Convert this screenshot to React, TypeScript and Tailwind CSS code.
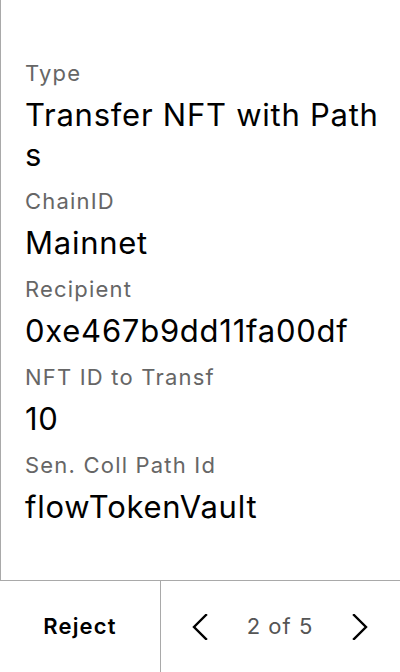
import React from 'react';

const fields = [
  { label: 'Type', value: 'Transfer NFT with Paths' },
  { label: 'ChainID', value: 'Mainnet' },
  { label: 'Recipient', value: '0xe467b9dd11fa00df' },
  { label: 'NFT ID to Transf', value: '10' },
  { label: 'Sen. Coll Path Id', value: 'flowTokenVault' },
];

function Chevron({ dir }: { dir: 'left' | 'right' }) {
  return (
    <svg width="16" height="26" viewBox="0 0 16 26" fill="none" aria-hidden>
      <path
        d={dir === 'left' ? 'M14 1 L2 13 L14 25' : 'M2 1 L14 13 L2 25'}
        stroke="#000"
        strokeWidth="2.4"
        strokeLinecap="square"
      />
    </svg>
  );
}

export default function App() {
  return (
    <div
      className="flex h-[672px] w-[400px] flex-col bg-white text-black"
      style={{ fontFamily: 'Inter, "Noto Sans", sans-serif' }}
    >
      <main className="flex flex-1 flex-col gap-3 border-l border-[#a9a9a9] pl-6 pr-4 pt-[59px]">
        {fields.map((f) => (
          <div key={f.label} className="flex flex-col gap-2">
            <div className="text-[22px] leading-7 tracking-[1.2px] text-[#666666]">{f.label}</div>
            <div className="text-[31px] leading-10 tracking-[0.75px] break-all">{f.value}</div>
          </div>
        ))}
      </main>
      <footer className="flex h-[92px] border-t border-[#a9a9a9]">
        <button className="flex w-[160px] items-center justify-center text-[22px] font-semibold tracking-[1.2px]">
          Reject
        </button>
        <div className="flex flex-1 items-center justify-between border-l border-[#a9a9a9] pl-[31px] pr-[32px]">
          <Chevron dir="left" />
          <span className="text-[22px] tracking-[1px] text-[#555555]">2 of 5</span>
          <Chevron dir="right" />
        </div>
      </footer>
    </div>
  );
}
